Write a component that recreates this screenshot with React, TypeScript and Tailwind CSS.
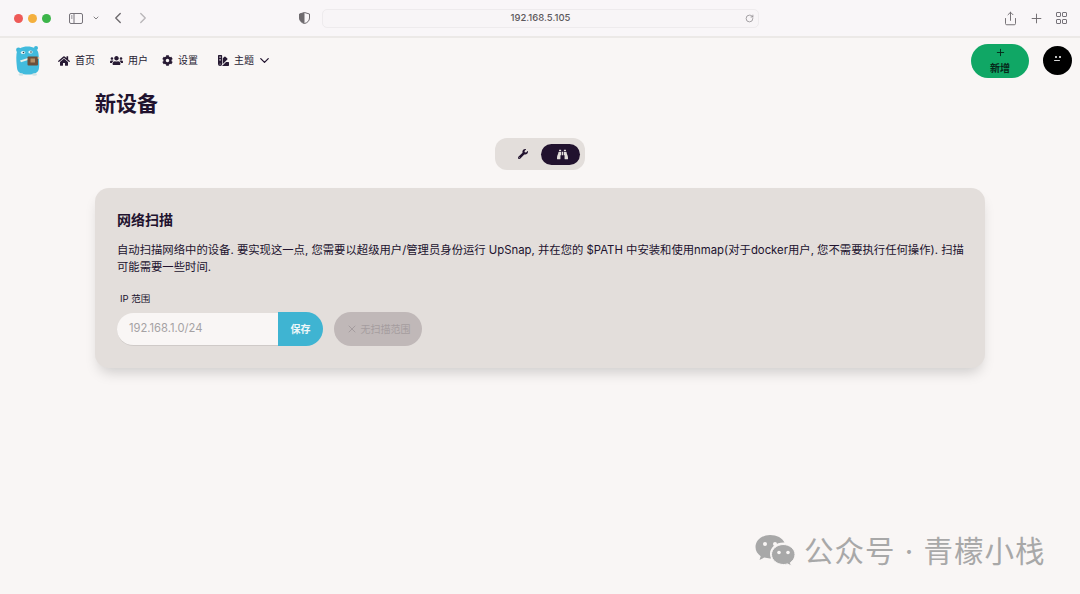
import { ChevronDown, ChevronLeft, ChevronRight, Plus, RotateCw, Share, X } from 'lucide-react';
import React from 'react';
import { FaBinoculars, FaCog, FaHome, FaSwatchbook, FaUsers, FaWrench } from 'react-icons/fa';

const font = "font-['Inter','Noto_Sans_CJK_SC',sans-serif]";

const Gopher = () => (
  <svg width="26" height="31" viewBox="0 0 26 31">
    <circle cx="3.500" cy="5" r="2.400" fill="#3eb6d8" />
    <circle cx="21" cy="3" r="2" fill="#3eb6d8" />
    <path d="M1.500 9C2 3.500 7 1.500 12.500 1.500S23 3.500 23.500 9c.5 5 1 10 .5 14-.5 5-5 6.500-11 6.500S2.500 28 2 23C1.500 18 1 14 1.500 9z" fill="#42bbdd" />
    <ellipse cx="6" cy="29.500" rx="2.500" ry="1.200" fill="#cfe4e6" />
    <ellipse cx="19.500" cy="29.500" rx="2.500" ry="1.200" fill="#cfe4e6" />
    <ellipse cx="8" cy="7.500" rx="2.200" ry="1.500" fill="#e8f6f8" />
    <ellipse cx="15.500" cy="7" rx="2.200" ry="1.500" fill="#e8f6f8" />
    <circle cx="8.500" cy="7.500" r=".8" fill="#1d3b48" />
    <circle cx="16" cy="7" r=".8" fill="#1d3b48" />
    <path d="M5 15.500l8-2.500v2l-7 2.300z" fill="#e9efe9" />
    <rect x="12.500" y="11.500" width="10.500" height="9" rx="1" fill="#6d4f3a" />
    <rect x="15.500" y="13.500" width="4.500" height="4" fill="#b48f66" />
    <circle cx="23.500" cy="13" r="1" fill="#d7c3a3" />
  </svg>
);

const WeChat = () => (
  <svg width="41" height="33" viewBox="0 0 41 33" fill="#a8a8a8">
    <path d="M15 0C7 0 .5 5.300.5 12c0 3.700 2 7 5.200 9.200L4.500 25l4.700-2.400c1.800.5 3.800.8 5.800.8h1C15.300 22 15 20.500 15 19c0-6.600 6-11.500 13.500-11.500h1C27.500 3 21.800 0 15 0z" />
    <path d="M28.500 9.500C21.800 9.500 16.500 14 16.500 19.500s5.300 10 12 10c1.400 0 2.800-.2 4-.6l3.900 2.100-1-3.400c2.800-1.800 4.600-4.800 4.600-8.100 0-5.500-5.300-10-12-10z" stroke="#f9f6f5" strokeWidth="1" />
    <circle cx="10" cy="9" r="2" fill="#f9f6f5" />
    <circle cx="20" cy="9" r="2" fill="#f9f6f5" />
    <circle cx="24" cy="17.500" r="1.800" fill="#f9f6f5" />
    <circle cx="33" cy="17.500" r="1.800" fill="#f9f6f5" />
  </svg>
);

const BrowserBar = () => (
  <div className="flex h-[38px] items-center border-b-2 border-[#ece9e7] bg-[#f9f6f8] text-[#6e6a6e]">
    <div className="flex w-[322px] items-center">
      <div className="ml-[14px] flex gap-[5px]">
        <span className="size-[9px] rounded-full bg-[#ee5a58]" />
        <span className="size-[9px] rounded-full bg-[#f4b03e]" />
        <span className="size-[9px] rounded-full bg-[#3cb54a]" />
      </div>
      <svg className="ml-[18px]" width="14" height="11" viewBox="0 0 14 11" fill="none" stroke="#77737a">
        <rect x=".5" y=".5" width="13" height="10" rx="1.500" />
        <path d="M5 .5v10" />
        <path d="M2 3h1.500M2 5h1.500" />
      </svg>
      <ChevronDown className="ml-[9px]" size={8} strokeWidth={2.500} />
      <ChevronLeft className="ml-[9px]" size={18} strokeWidth={1.800} />
      <ChevronRight className="ml-[7px] text-[#b9b6b9]" size={18} strokeWidth={1.800} />
      <svg className="ml-[147px]" width="11" height="12" viewBox="0 0 11 12">
        <path d="M5.500.5l5 1.500v4c0 3-2.500 5-5 5.500-2.500-.5-5-2.500-5-5.500V2z" fill="none" stroke="#6e6a6e" />
        <path d="M5.500.5v11c-2.500-.5-5-2.500-5-5.500V2z" fill="#6e6a6e" />
      </svg>
    </div>
    <div className="flex h-[19px] w-[437px] items-center rounded-[5px] border border-[#eeebed] bg-[#f8f5f7] pr-1">
      <span className={`${font} flex-1 pl-[13px] text-center text-[9.500px] font-medium text-[#5c585c]`}>192.168.5.105</span>
      <RotateCw className="text-[#8a868a]" size={9} />
    </div>
    <div className="ml-auto mr-[13px] flex items-center">
      <Share size={15} strokeWidth={1.500} />
      <Plus className="ml-[11px]" size={15} strokeWidth={1.500} />
      <div className="ml-[12px] grid grid-cols-2 gap-[1.500px]">
        <span className="size-[5px] rounded-[1px] border border-[#77737a]" />
        <span className="size-[5px] rounded-[1px] border border-[#77737a]" />
        <span className="size-[5px] rounded-[1px] border border-[#77737a]" />
        <span className="size-[5px] rounded-[1px] border border-[#77737a]" />
      </div>
    </div>
  </div>
);

const NavItem = ({ icon, label, className }: { icon: React.ReactNode; label: string; className: string }) => (
  <div className={`flex items-center gap-[5px] text-[10px] text-[#271a33] ${className}`}>
    {icon}
    <span>{label}</span>
  </div>
);

const App = () => {
  return (
    <div className={`${font} relative h-[594px] w-[1080px] overflow-hidden bg-[#f9f6f5] text-[#21122e]`}>
      <BrowserBar />
      <nav className="flex h-[45px] items-center">
        <div className="ml-[15px]">
          <Gopher />
        </div>
        <NavItem className="ml-[17px]" icon={<FaHome size={12} />} label="首页" />
        <NavItem className="ml-[15px]" icon={<FaUsers size={13} />} label="用户" />
        <NavItem className="ml-[14px]" icon={<FaCog size={11} />} label="设置" />
        <NavItem className="ml-[20px]" icon={<FaSwatchbook size={11} />} label="主题" />
        <ChevronDown className="ml-[3px]" size={15} strokeWidth={2} />
        <div className="ml-auto flex h-[34px] w-[58px] flex-col items-center justify-center rounded-full bg-[#10a765] text-[10px] font-semibold leading-[14px] text-[#06281a]">
          <Plus size={11} strokeWidth={2} />
          <span className="mt-[3px]">新增</span>
        </div>
        <div className="relative ml-[14px] mr-[8px] size-[29px] rounded-full bg-black">
          <span className="absolute left-[12px] top-[10px] size-[1.500px] rounded-full bg-white" />
          <span className="absolute left-[16px] top-[10px] size-[1.500px] rounded-full bg-white" />
          <span className="absolute left-[11px] top-[14px] h-[1px] w-[6px] rounded-full bg-[#d8d8d8]" />
        </div>
      </nav>
      <main className="px-[95px]">
        <h1 className="mt-[6px] text-[21px] font-bold leading-[30px]">新设备</h1>
        <div className="mt-[19px] flex justify-center">
          <div className="flex h-[32px] w-[90px] items-center justify-end gap-[13px] rounded-[12px] bg-[#e3dedb] pr-[5px]">
            <FaWrench size={10} />
            <div className="flex h-[21px] w-[39px] items-center justify-center rounded-full bg-[#21122e] pl-[4px]">
              <FaBinoculars className="text-[#e3dedb]" size={11} />
            </div>
          </div>
        </div>
        <section className="mt-[18px] h-[180px] rounded-[14px] bg-[#e3dedb] px-[22px] pt-[21px] shadow-[0_8px_14px_-4px_rgba(0,0,0,0.18)]">
          <h2 className="text-[14px] font-bold leading-[21px]">网络扫描</h2>
          <p className="-mr-[12px] mt-[12px] text-[11.350px] leading-[17px]">
            自动扫描网络中的设备. 要实现这一点, 您需要以超级用户/管理员身份运行 UpSnap, 并在您的 $PATH 中安装和使用nmap(对于docker用户, 您不需要执行任何操作). 扫描
            <br />
            可能需要一些时间.
          </p>
          <div className="ml-[3px] mt-[16px] text-[9.500px] leading-[14px]">IP 范围</div>
          <div className="mt-[6px] flex items-center">
            <div className="flex h-[33px] w-[161px] items-center rounded-l-full border-b border-[#cfcac8] bg-[#f9f6f5] pl-[12px] text-[11.200px] text-[#a5a2a4]">
              192.168.1.0/24
            </div>
            <div className="flex h-[34px] w-[45px] items-center justify-center rounded-r-full bg-[#3fb4d2] text-[10px] font-bold text-[#eef7f9]">
              保存
            </div>
            <div className="ml-[11px] flex h-[34px] w-[88px] items-center justify-center gap-[3px] rounded-full bg-[#c0b8b8] text-[10px] text-[#a59d9f]">
              <X size={12} />
              <span>无扫描范围</span>
            </div>
          </div>
        </section>
      </main>
      <div className="absolute left-[755px] top-[534px] flex items-center gap-[8px] text-[#a8a8a8]">
        <WeChat />
        <span className="text-[29.500px] leading-[34px] tracking-[1px]">公众号 · 青檬小栈</span>
      </div>
    </div>
  );
};

export default App;
